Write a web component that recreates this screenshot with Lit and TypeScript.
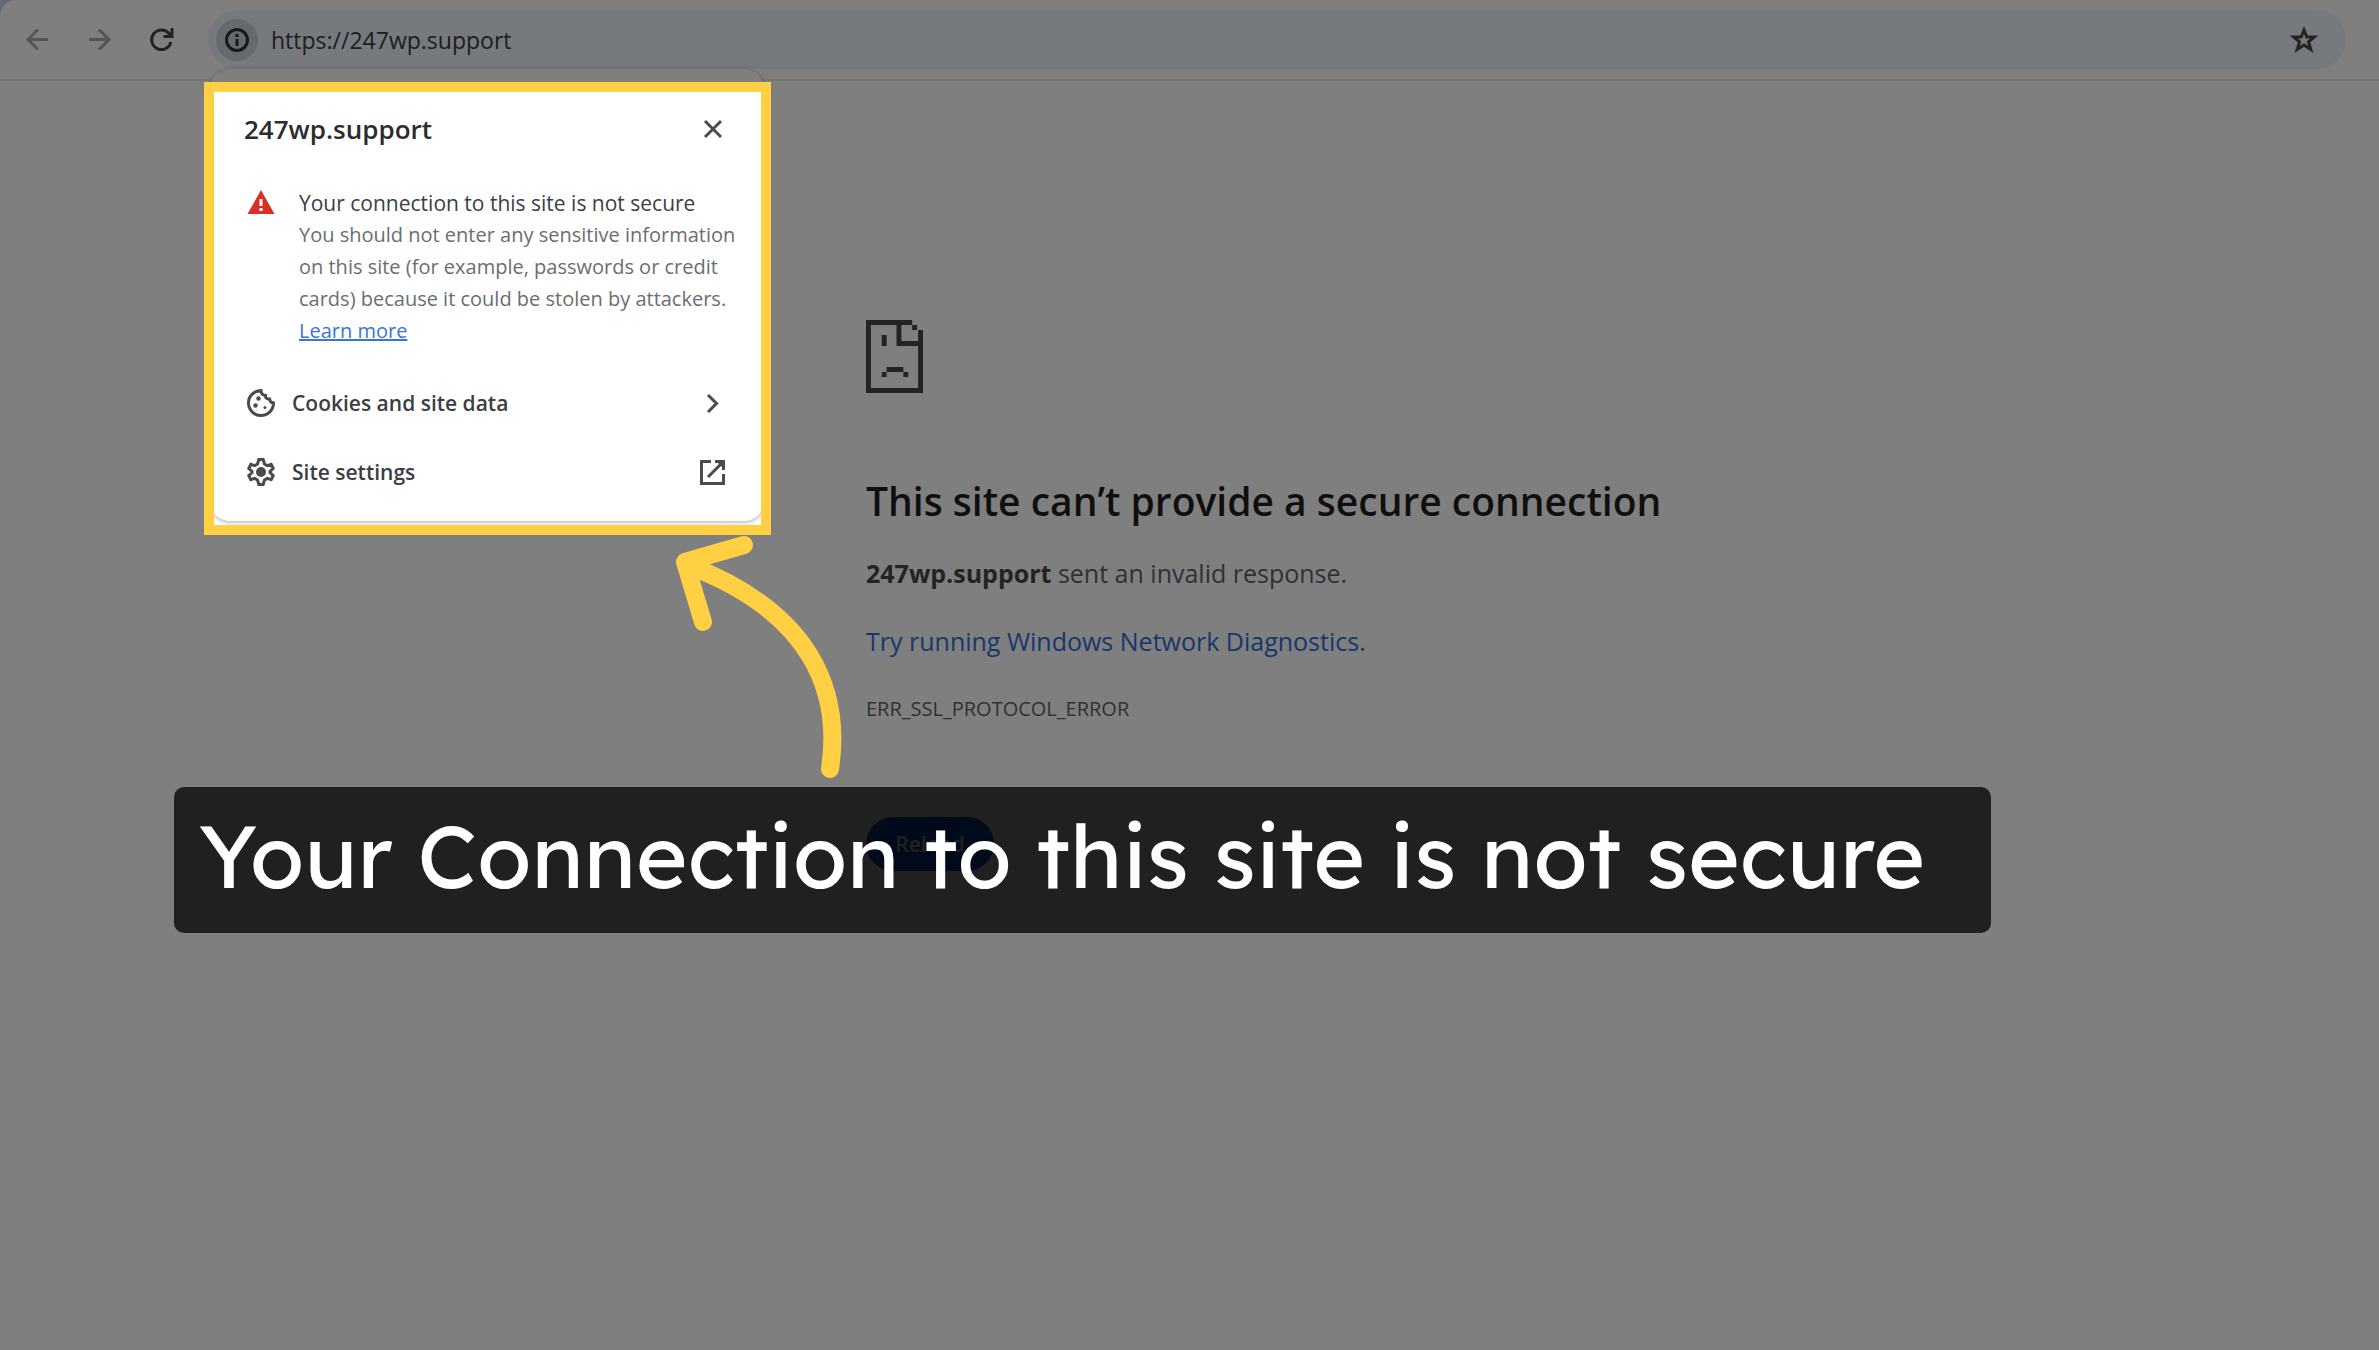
import { LitElement, html, css } from "lit";
import { customElement } from "lit/decorators.js";

@customElement("browser-toolbar")
class BrowserToolbar extends LitElement {
  static styles = css`
    :host {
      display: block;
      background: #c4d3f2;
    }
    .bar {
      display: flex;
      align-items: center;
      gap: 35px;
      height: 79px;
      padding: 0 33px 0 24px;
      background: #fff;
      border-top-left-radius: 16px;
      border-bottom: 2px solid #eaebed;
      box-sizing: content-box;
    }
    button {
      display: flex;
      align-items: center;
      justify-content: center;
      padding: 0;
      border: 0;
      background: none;
      color: #474747;
    }
    .nav {
      width: 27px;
      height: 40px;
    }
    .nav:disabled {
      color: #a8a8a8;
    }
    .omnibox {
      display: flex;
      align-items: center;
      flex: 1;
      height: 59px;
      padding: 0 28px 0 8px;
      border-radius: 30px;
      background: #edf2fb;
      gap: 13px;
      margin-left: -2px;
    }
    .info {
      width: 42px;
      height: 42px;
      border-radius: 50%;
      background: #cdd2dc;
      color: #303236;
    }
    .url {
      flex: 1;
      min-width: 0;
      padding: 0;
      border: 0;
      outline: 0;
      background: none;
      color: #3c3e42;
      font: 23px/36px "Open Sans", "Noto Sans", sans-serif;
    }
    svg {
      display: block;
      fill: none;
      stroke: currentColor;
      stroke-width: 3;
    }
  `;
  render() {
    return html`<nav class="bar" aria-label="Browser toolbar">
      <button class="nav" disabled aria-label="Back">
        <svg width="27" height="27" viewBox="0 0 27 27"><path d="M24 13.5H4M14 3.5L4 13.5L14 23.5" /></svg>
      </button>
      <button class="nav" disabled aria-label="Forward">
        <svg width="27" height="27" viewBox="0 0 27 27"><path d="M3 13.5H23M13 3.5L23 13.5L13 23.5" /></svg>
      </button>
      <button class="nav" aria-label="Reload page">
        <svg width="27" height="27" viewBox="0 0 27 27"><path d="M23 16A9.8 9.8 0 1 1 21 7.5L23 10M24 2V10.5H15.5" /></svg>
      </button>
      <div class="omnibox">
        <button class="info" aria-label="View site information">
          <svg width="26" height="26" viewBox="0 0 26 26">
            <circle cx="13" cy="13" r="10.5" /><path d="M13 12V19M13 7V10" />
          </svg>
        </button>
        <input class="url" aria-label="Address" value="https://247wp.support" />
        <button aria-label="Bookmark this tab">
          <svg width="28" height="28" viewBox="0 0 28 28">
            <path d="M14 4L16.8 11H24.5L18.5 15.8L20.8 23.5L14 19L7.2 23.5L9.5 15.8L3.5 11H11.2Z" />
          </svg>
        </button>
      </div>
    </nav>`;
  }
}

@customElement("error-page")
class ErrorPage extends LitElement {
  static styles = css`
    :host {
      display: block;
      padding: 239px 32px 0 866px;
      font-family: "Open Sans", "Noto Sans", sans-serif;
      color: #5f6368;
    }
    svg {
      display: block;
      fill: #474747;
    }
    h1 {
      margin: 80px 0 0;
      font-size: 39px;
      line-height: 56px;
      font-weight: 600;
      color: #1f1f1f;
    }
    p {
      margin: 0;
      font-size: 25px;
      line-height: 36px;
    }
    .summary {
      margin-top: 26px;
    }
    strong {
      color: #474747;
    }
    .suggest {
      margin-top: 32px;
    }
    a {
      color: #2f70d8;
      text-decoration: none;
    }
    .code {
      margin-top: 32px;
      font-size: 20px;
    }
    button {
      margin-top: 90px;
      width: 128px;
      height: 54px;
      padding: 0;
      border: 0;
      border-radius: 27px;
      background: #0b57d0;
      color: #fff;
      font: 600 21px/32px "Open Sans", "Noto Sans", sans-serif;
    }
  `;
  render() {
    return html`<main>
      <svg width="57" height="73" viewBox="0 0 58 73" preserveAspectRatio="none" aria-hidden="true">
        <path
          fill-rule="evenodd"
          d="M0 0H47V5H52V10H58V73H0ZM5 5V68H53V26H31V5ZM36 5V21H53V10H47V5Z"
        />
        <path d="M16 15H21V26H16ZM21 47H38V52H21ZM16 52H21V57H16ZM38 52H43V57H38Z" />
      </svg>
      <h1>This site can’t provide a secure connection</h1>
      <p class="summary"><strong>247wp.support</strong> sent an invalid response.</p>
      <p class="suggest"><a href="#diagnostics">Try running Windows Network Diagnostics</a>.</p>
      <p class="code">ERR_SSL_PROTOCOL_ERROR</p>
      <button>Reload</button>
    </main>`;
  }
}

@customElement("site-info")
class SiteInfo extends LitElement {
  static styles = css`
    :host {
      display: block;
      box-sizing: border-box;
      padding: 38px 38px 27px 34px;
      border-radius: 20px;
      background: #fff;
      box-shadow: 0 1px 5px rgba(0, 0, 0, 0.35);
      font-family: "Open Sans", "Noto Sans", sans-serif;
      color: #3c3e42;
    }
    header {
      display: flex;
      align-items: center;
      justify-content: space-between;
      padding-right: 2px;
    }
    h2 {
      margin: 0;
      font-size: 26px;
      line-height: 44px;
      font-weight: 600;
      color: #2b2c2f;
    }
    button {
      padding: 0;
      border: 0;
      background: none;
      color: inherit;
    }
    svg {
      display: block;
      flex: none;
      fill: none;
      stroke: #4a4b4e;
      stroke-width: 3;
    }
    .status {
      display: flex;
      gap: 24px;
      margin-top: 36px;
      padding-left: 3px;
    }
    .warn {
      margin-top: 3px;
      fill: #d93025;
      stroke: none;
    }
    .mark {
      fill: #fff;
    }
    h3 {
      margin: 0;
      font-size: 21px;
      line-height: 32px;
      font-weight: 400;
    }
    p {
      margin: 0;
      font-size: 20px;
      line-height: 32px;
      color: #6b6d71;
      white-space: nowrap;
    }
    a {
      color: #3a74dc;
      text-decoration-thickness: 2px;
    }
    .rows {
      display: grid;
      gap: 25px;
      margin-top: 34px;
    }
    .row {
      display: flex;
      align-items: center;
      gap: 16px;
      height: 44px;
      font: 600 21px/32px "Open Sans", "Noto Sans", sans-serif;
      text-align: left;
    }
    .label {
      flex: 1;
    }
    .dot {
      fill: #4a4b4e;
      stroke: none;
    }
  `;
  render() {
    return html`<section aria-label="Site information">
      <header>
        <h2>247wp.support</h2>
        <button aria-label="Close">
          <svg width="22" height="22" viewBox="0 0 22 22"><path d="M3 3L19 19M19 3L3 19" /></svg>
        </button>
      </header>
      <div class="status">
        <svg class="warn" width="28" height="25" viewBox="0 0 28 25" aria-hidden="true">
          <path d="M14 0L27.5 24H0.5Z" /><path class="mark" d="M12.5 9H15.5V16H12.5ZM12.5 18H15.5V21H12.5Z" />
        </svg>
        <div>
          <h3>Your connection to this site is not secure</h3>
          <p>
            You should not enter any sensitive information<br />on this site (for example, passwords or credit<br />cards)
            because it could be stolen by attackers.
          </p>
          <p><a href="#learn">Learn more</a></p>
        </div>
      </div>
      <div class="rows">
        <button class="row">
          <svg width="32" height="32" viewBox="0 0 32 32" aria-hidden="true">
            <path d="M17 3.5A12.5 12.5 0 1 0 29.5 16Q26 15.5 25.5 12Q21 12 21.5 8.5Q17 8 17 3.5Z" />
            <g class="dot"><circle cx="14.5" cy="11.5" r="2.2" /><circle cx="11.5" cy="18.5" r="2.2" /><circle cx="21" cy="20.5" r="1.5" /></g>
          </svg>
          <span class="label">Cookies and site data</span>
          <svg width="27" height="27" viewBox="0 0 27 27" aria-hidden="true"><path d="M9 5L17.5 13.5L9 22" /></svg>
        </button>
        <button class="row">
          <svg width="32" height="32" viewBox="0 0 32 32" aria-hidden="true">
            <path
              d="M14.8 3.5H19.2L20.5 8L23.2 9.6L27.2 8.4L29.2 12.4L26 15.3V16.7L29.2 19.6L27.2 23.6L23.2 22.4L20.5 24L19.2 28.5H14.8L13.5 24L10.8 22.4L6.8 23.6L4.8 19.6L8 16.7V15.3L4.8 12.4L6.8 8.4L10.8 9.6L13.5 8Z"
            />
            <circle class="dot" cx="17" cy="16" r="5" />
          </svg>
          <span class="label">Site settings</span>
          <svg width="27" height="27" viewBox="0 0 27 27" aria-hidden="true">
            <path d="M12 2.5H2.5V24.5H24.5V15M16 2.5H24.5V11M24 3L9 18" /><path class="dot" d="M17 2H25V10Z" />
          </svg>
        </button>
      </div>
    </section>`;
  }
}

@customElement("app-root")
class AppRoot extends LitElement {
  static styles = css`
    :host {
      display: block;
      position: relative;
      min-height: 100vh;
      overflow: hidden;
      background: #fff;
    }
    site-info {
      position: absolute;
      top: 69px;
      left: 210px;
      width: 554px;
    }
    .frame {
      position: absolute;
      top: 82px;
      left: 204px;
      width: 547px;
      height: 433px;
      border: 10px solid #ffd043;
      box-shadow: 0 0 0 3000px rgba(0, 0, 0, 0.5);
      pointer-events: none;
    }
    .arrow {
      position: absolute;
      top: 530px;
      left: 660px;
      fill: none;
      stroke: #ffd043;
      stroke-width: 18;
      stroke-linecap: round;
      stroke-linejoin: round;
    }
    .caption {
      position: absolute;
      top: 787px;
      left: 174px;
      box-sizing: border-box;
      margin: 0;
      padding: 13px 66px 23px 25px;
      border-radius: 10px;
      background: rgba(0, 0, 0, 0.75);
      color: #fff;
      font: 400 88px/110px Lexend, Inter, "Liberation Sans", sans-serif;
      white-space: nowrap;
    }
  `;
  render() {
    return html`
      <browser-toolbar></browser-toolbar>
      <error-page></error-page>
      <site-info></site-info>
      <div class="frame"></div>
      <svg class="arrow" width="200" height="250" viewBox="660 530 200 250" aria-hidden="true">
        <path d="M830 769C842 690 810 612 690 566M744 545L685 562L703 622" />
      </svg>
      <p class="caption">Your Connection to this site is not secure</p>
    `;
  }
}
